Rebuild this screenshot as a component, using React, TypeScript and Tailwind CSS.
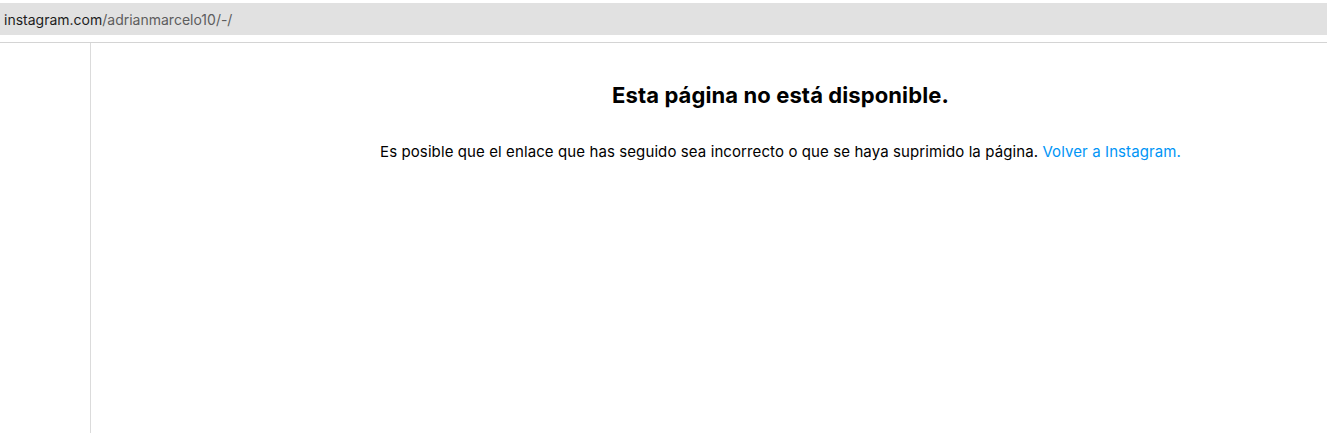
export default function App() {
  return (
    <div
      className="flex h-[433px] w-[1327px] flex-col overflow-hidden bg-white"
      style={{ fontFamily: "Inter, 'Noto Sans', sans-serif" }}
    >
      {/* Address bar */}
      <div className="pt-[3px]">
        <div className="flex h-[32px] items-center bg-[#e1e1e1] pl-[4px] text-[14px]">
          <span className="text-[#1d1d1d]">instagram.com</span>
          <span className="text-[#5d5d5d]">/adrianmarcelo10/-/</span>
        </div>
      </div>

      <div className="mt-[7px] h-px bg-[#d4d4d4]" />

      {/* Page */}
      <div className="flex flex-1">
        <div className="w-[91px] border-r border-[#dbdbdb]" />
        <main className="flex-1 pl-[143px]">
          <div className="flex flex-col items-center pt-[39px] text-black">
            <h2 className="text-[22px] leading-[27px] font-bold tracking-[0.1px]">
              Esta página no está disponible.
            </h2>
            <p className="mt-[33px] text-[15px] leading-[19px] tracking-[0.1px]">
              Es posible que el enlace que has seguido sea incorrecto o que se haya suprimido la página.{" "}
              <a className="text-[#0095f6]">Volver a Instagram.</a>
            </p>
          </div>
        </main>
      </div>
    </div>
  )
}
